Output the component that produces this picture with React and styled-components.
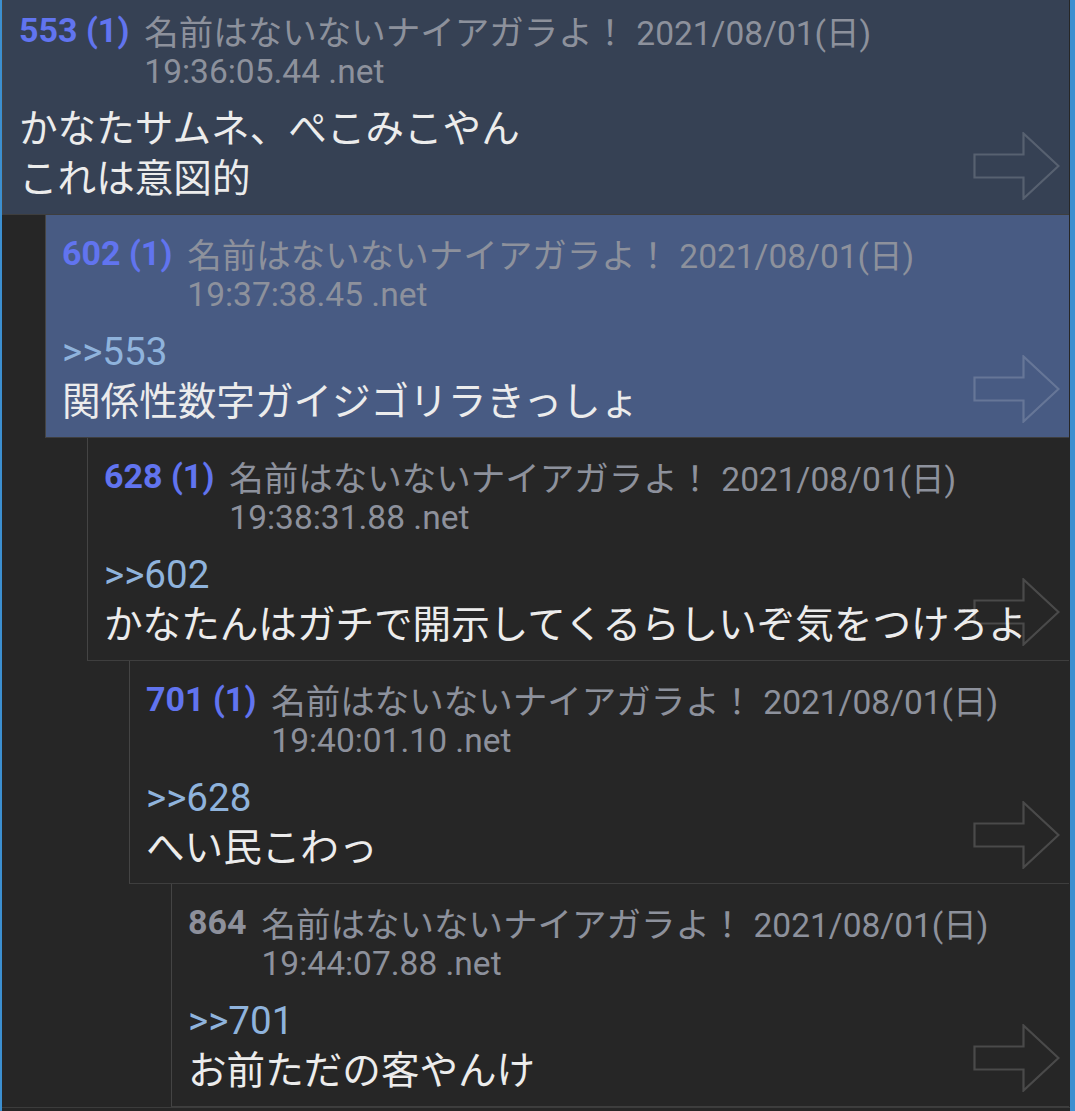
import React from 'react';
import styled, { createGlobalStyle } from 'styled-components';

const GlobalStyle = createGlobalStyle`
  html, body {
    margin: 0;
    padding: 0;
    background: #262626;
  }
  * {
    box-sizing: border-box;
  }
`;

const latin = `Roboto, "Noto Sans CJK JP", sans-serif`;

const Screen = styled.div`
  height: 1111px;
  overflow: hidden;
  background: #262626;
  border-left: 2px solid #3c8fd0;
  border-right: 5px solid #3c8fd0;
  font-family: ${latin};
`;

const Thread = styled.div`
  margin-top: -8px;
  padding-right: 1px;
  border-bottom: 1px solid #3c3c3c;
`;

// 返信の深さに応じて右にずれていくレス
const Post = styled.div`
  position: relative;
  margin-left: ${(p) => (p.$depth ? p.$depth * 42 + 1 : 0)}px;
  padding: 17px 8px 10px 16px;
  background: ${(p) =>
    p.$tone === 'focus' ? '#485b83' : p.$tone === 'parent' ? '#364154' : '#262626'};
  border-left: 1px solid #444444;
  border-bottom: 1px solid #3e3e3e;
`;

const Header = styled.div`
  display: flex;
  align-items: flex-start;
  gap: 15px;
  color: #8d919c;
`;

const Number = styled.div`
  height: 42px;
  line-height: 42px;
  font-family: ${latin};
  font-weight: 700;
  font-size: 34px;
  white-space: nowrap;
  color: ${(p) => (p.$replied ? '#6174ef' : '#8d909b')};
`;

const Meta = styled.div`
  display: flex;
  flex-direction: column;
  white-space: nowrap;
`;

const MetaLine = styled.div`
  height: 42px;
  line-height: 42px;
  font-size: 33.5px;
`;

const Name = styled.span`
  font-family: "Noto Sans CJK JP", sans-serif;
  font-size: 34.5px;
`;

const DateText = styled.span`
  font-family: ${latin};
  margin-left: 9px;
`;

const Body = styled.div`
  margin-top: 11px;
  font-family: ${latin};
  font-size: 38.6px;
  color: #ececec;
  white-space: nowrap;
`;

const Line = styled.div`
  height: 50px;
  line-height: 50px;
  color: ${(p) => (p.$anchor ? '#8fb3dc' : 'inherit')};
`;

const ArrowButton = styled.svg`
  position: absolute;
  right: 9px;
  bottom: 14px;
  width: 87px;
  height: 68px;
  pointer-events: none;
`;

function Arrow() {
  return (
    <ArrowButton viewBox="0 0 87 68">
      <path
        d="M1.5 22.5 H50.5 V1.5 L85.5 34 L50.5 66.5 V45.5 H1.5 Z"
        fill="none"
        stroke="rgba(255,255,255,0.17)"
        strokeWidth="2.2"
        strokeLinejoin="miter"
      />
    </ArrowButton>
  );
}

const posts = [
  {
    no: 553,
    replies: 1,
    tone: 'parent',
    time: '19:36:05.44',
    lines: ['かなたサムネ、ぺこみこやん', 'これは意図的'],
  },
  {
    no: 602,
    replies: 1,
    tone: 'focus',
    time: '19:37:38.45',
    anchor: 553,
    lines: ['関係性数字ガイジゴリラきっしょ'],
  },
  {
    no: 628,
    replies: 1,
    time: '19:38:31.88',
    anchor: 602,
    lines: ['かなたんはガチで開示してくるらしいぞ気をつけろよ'],
  },
  {
    no: 701,
    replies: 1,
    time: '19:40:01.10',
    anchor: 628,
    lines: ['へい民こわっ'],
  },
  {
    no: 864,
    replies: 0,
    time: '19:44:07.88',
    anchor: 701,
    lines: ['お前ただの客やんけ'],
  },
];

export default function App() {
  return (
    <>
      <GlobalStyle />
      <Screen>
        <Thread>
          {posts.map((post, i) => (
            <Post key={post.no} $depth={i} $tone={post.tone}>
              <Header>
                <Number $replied={post.replies > 0}>
                  {post.no}
                  {post.replies > 0 ? ` (${post.replies})` : ''}
                </Number>
                <Meta>
                  <MetaLine>
                    <Name>名前はないないナイアガラよ！</Name>
                    <DateText>2021/08/01(日)</DateText>
                  </MetaLine>
                  <MetaLine>{post.time} .net</MetaLine>
                </Meta>
              </Header>
              <Body>
                {post.anchor && <Line $anchor>&gt;&gt;{post.anchor}</Line>}
                {post.lines.map((line) => (
                  <Line key={line}>{line}</Line>
                ))}
              </Body>
              <Arrow />
            </Post>
          ))}
        </Thread>
      </Screen>
    </>
  );
}
